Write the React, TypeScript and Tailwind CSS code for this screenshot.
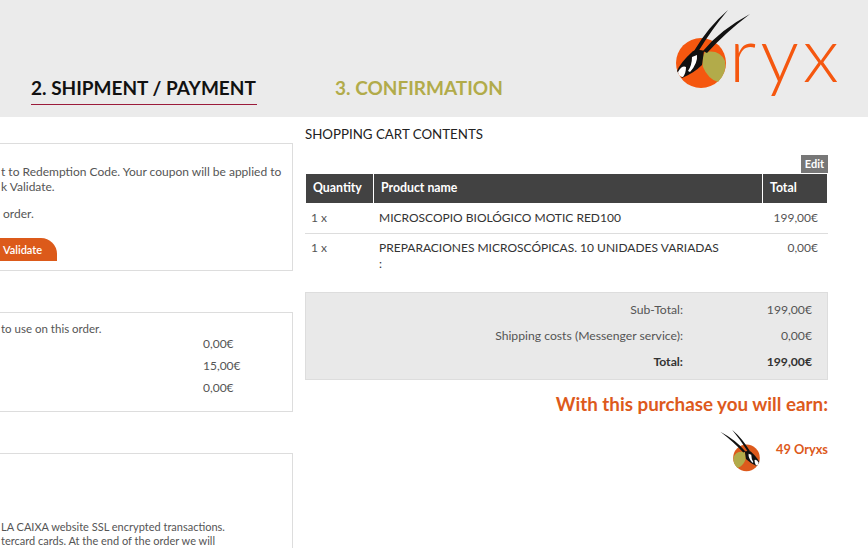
const OryxMark = ({ className, mirrored }: { className: string; mirrored?: boolean }) => (
  <svg viewBox="0 0 90 90" className={className}>
    <g transform={mirrored ? 'translate(90 0) scale(-1 1)' : undefined}>
      <circle cx="31" cy="58" r="25" fill={mirrored ? '#dd5a1c' : '#f5570f'} />
      <path d="M35 47 Q50 44 55 56 Q57 68 48 77 Q38 74 33 62 Q31 53 35 47Z" fill="#b2ab4a" />
      <path d="M23 46 Q30 44 34 46 L32 60 Q24 68 12 73 L7 66 Q10 58 23 46Z" fill="#111" />
      <path d="M8 67 Q12 60 16 62 Q16 68 13 72 Q9 72 8 67Z" fill="#fff" />
      <path d="M22 52 L27 50 Q28 58 20 67 L18 66 Q22 60 22 52Z" fill="#fff" />
      <path d="M58 5 Q38 22 24 46 L28 47 Q42 24 58 5Z" fill="#111" />
      <path d="M80 9 Q50 25 33 46 L37 48 Q55 28 80 9Z" fill="#111" />
    </g>
  </svg>
);

const Logo = () => (
  <div className="ml-auto flex items-start pr-[32px] pt-[5px]">
    <OryxMark className="w-[90px] h-[90px] -mr-[25px]" />
    <span className="w-[107px] font-light text-[77px] leading-none tracking-[4px] -ml-[6px] text-[#f5570f] mt-[9px]">ryx</span>
  </div>
);

const Row = ({ label, value, bold }: { label: string; value: string; bold?: boolean }) => (
  <div className={`flex h-[26px] items-center text-[12.2px] ${bold ? 'font-bold text-[#333]' : ''}`}>
    <span className="w-[377px] text-right">{label}</span>
    <span className="w-[129px] text-right">{value}</span>
  </div>
);

export default function App() {
  return (
    <div
      className="w-[868px] h-[548px] overflow-hidden bg-white text-[12px] text-[#555]"
      style={{ fontFamily: 'Lato, "Noto Sans", sans-serif' }}
    >
      {/* Header */}
      <header className="flex h-[117px] bg-[#ebebeb] overflow-hidden">
        <div className="flex items-start pt-[75px] pl-[31px]">
          <div className="w-[226px] h-[30px] border-b border-[#9b1b3a] text-[19px] leading-[26px] font-bold text-[#111] whitespace-nowrap">
            2. SHIPMENT / PAYMENT
          </div>
          <div className="ml-[78px] text-[19px] leading-[26px] font-bold text-[#b2ab4a] whitespace-nowrap">
            3. CONFIRMATION
          </div>
        </div>
        <Logo />
      </header>

      <main className="flex">
        {/* Left column */}
        <div className="w-[293px] shrink-0 pt-[26px]">
          <section className="-ml-4 h-[128px] border border-[#dddddd] pl-4 pt-[20px] leading-[15px] whitespace-nowrap">
            <p>t to Redemption Code. Your coupon will be applied to</p>
            <p>k Validate.</p>
            <p className="mt-[12px] pl-[2px]">order.</p>
            <button className="block -ml-4 mt-[17px] h-[23px] w-[72px] rounded-tr-[16px] rounded-bl-[16px] bg-[#dc5a1a] pl-[18px] text-left text-[11px] font-semibold text-white">
              Validate
            </button>
          </section>
          <section className="-ml-4 mt-[41px] h-[100px] border border-[#dddddd] pl-4 pt-[8px] whitespace-nowrap">
            <p className="text-[11.5px] leading-[15px]">to use on this order.</p>
            <div className="-mt-[3px] pl-[202px] leading-[22px]">
              <p>0,00€</p>
              <p>15,00€</p>
              <p>0,00€</p>
            </div>
          </section>
          <section className="-ml-4 mt-[41px] h-[140px] border border-[#dddddd] pl-4 pt-[66px] leading-[14px] text-[11px] whitespace-nowrap">
            <p>LA CAIXA website SSL encrypted transactions.</p>
            <p>tercard cards. At the end of the order we will</p>
          </section>
        </div>

        {/* Right column */}
        <div className="ml-3 w-[523px] shrink-0 pt-[10px]">
          <h2 className="text-[13.3px] leading-[15px] text-[#222]">SHOPPING CART CONTENTS</h2>
          <div className="mt-[13px] flex justify-end">
            <span className="flex h-[18px] w-[27px] items-center justify-center bg-[#777] text-[11px] font-bold text-white">
              Edit
            </span>
          </div>
          <div className="ml-px mr-px mt-px flex h-[29px] items-center bg-[#424242] text-[12.3px] font-bold text-white">
            <span className="w-[67px] pl-[7px]">Quantity</span>
            <span className="h-full w-px bg-white" />
            <span className="w-[388px] pl-[7px]">Product name</span>
            <span className="h-full w-px bg-white" />
            <span className="pl-[7px]">Total</span>
          </div>
          <div className="flex h-[31px] items-center border-b border-[#dddddd]">
            <span className="w-[74px] pl-[6px]">1 x</span>
            <span className="w-[384px] whitespace-nowrap text-[#333]">MICROSCOPIO BIOLÓGICO MOTIC RED100</span>
            <span className="w-[55px] text-right">199,00€</span>
          </div>
          <div className="flex items-start pt-[6px] leading-[16px]">
            <span className="w-[74px] pl-[6px]">1 x</span>
            <div className="w-[384px] whitespace-nowrap text-[#333]">
              <p>PREPARACIONES MICROSCÓPICAS. 10 UNIDADES VARIADAS</p>
              <p>:</p>
            </div>
            <span className="w-[55px] text-right">0,00€</span>
          </div>
          <div className="mt-[20px] h-[88px] border border-[#dddddd] bg-[#e9e9e9] pt-[4px]">
            <Row label="Sub-Total:" value="199,00€" />
            <Row label="Shipping costs (Messenger service):" value="0,00€" />
            <Row label="Total:" value="199,00€" bold />
          </div>
          <p className="mt-[13px] text-right text-[18.8px] leading-[22px] font-bold text-[#dd5a1c]">
            With this purchase you will earn:
          </p>
          <div className="mt-[12px] flex items-start justify-end">
            <OryxMark mirrored className="w-[48px] h-[48px]" />
            <span className="ml-[13px] mt-[13px] text-[12.8px] font-bold text-[#dd5a1c]">49 Oryxs</span>
          </div>
        </div>
      </main>
    </div>
  );
}
